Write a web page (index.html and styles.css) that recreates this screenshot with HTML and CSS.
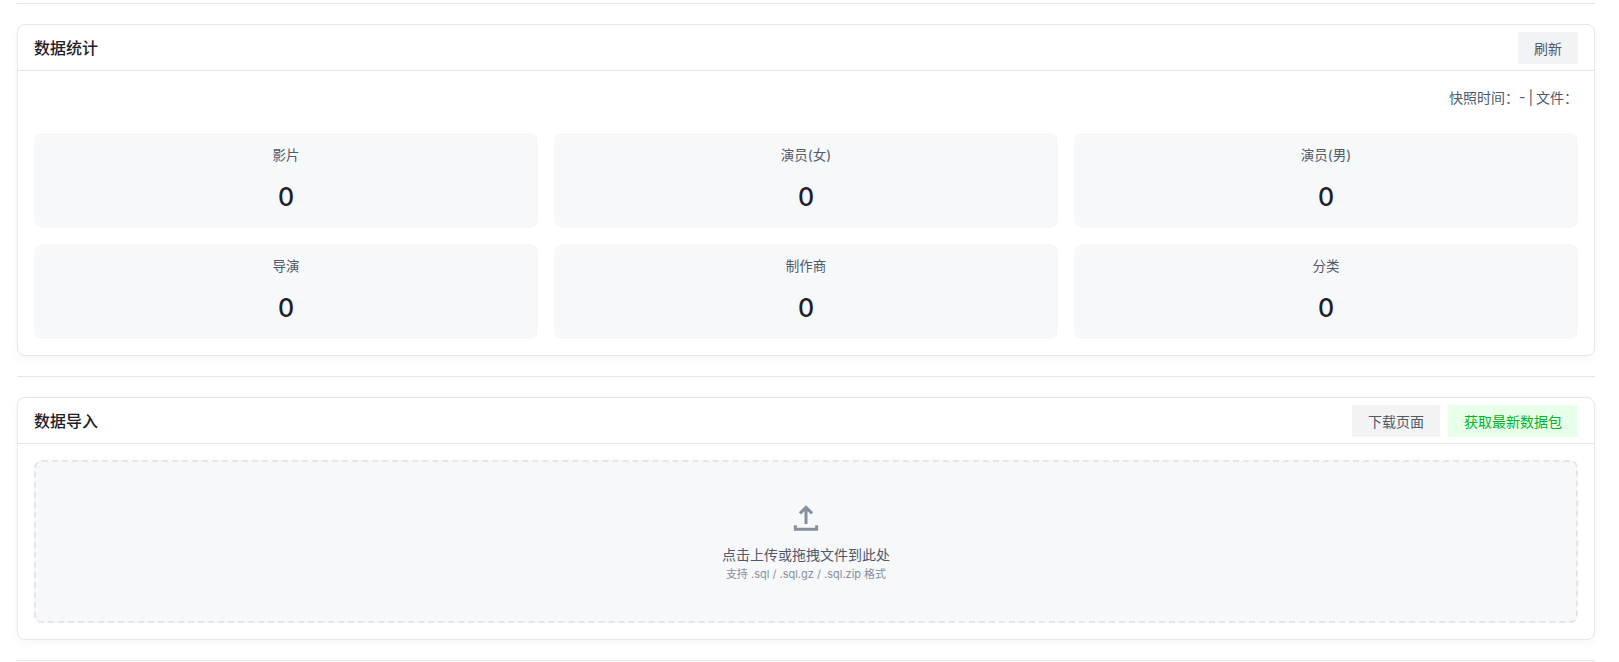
FILE: index.html
```html
<!DOCTYPE html>
<html lang="zh-CN">
<head>
<meta charset="utf-8">
<title>数据管理</title>
<link rel="stylesheet" href="styles.css">
</head>
<body>
<main class="page">
  <hr class="divider divider-top">
  <section class="card">
    <header class="card-header">
      <h2 class="card-title">数据统计</h2>
      <div class="actions"><button class="btn">刷新</button></div>
    </header>
    <div class="card-body">
      <p class="snapshot">快照时间：- | 文件：</p>
      <div class="stats">
        <div class="stat"><div class="stat-label">影片</div><div class="stat-value">0</div></div>
        <div class="stat"><div class="stat-label">演员(女)</div><div class="stat-value">0</div></div>
        <div class="stat"><div class="stat-label">演员(男)</div><div class="stat-value">0</div></div>
        <div class="stat"><div class="stat-label">导演</div><div class="stat-value">0</div></div>
        <div class="stat"><div class="stat-label">制作商</div><div class="stat-value">0</div></div>
        <div class="stat"><div class="stat-label">分类</div><div class="stat-value">0</div></div>
      </div>
    </div>
  </section>
  <hr class="divider">
  <section class="card">
    <header class="card-header">
      <h2 class="card-title">数据导入</h2>
      <div class="actions">
        <button class="btn">下载页面</button>
        <button class="btn btn-success">获取最新数据包</button>
      </div>
    </header>
    <div class="card-body">
      <div class="dropzone">
        <svg class="upload-icon" viewBox="0 0 48 48" fill="none" stroke="currentColor" stroke-width="4.5"><path d="M14.93 17.071 24.001 8l9.071 9.071m-9.07 16.071v-25M40 35v6H8v-6"/></svg>
        <div class="drop-title">点击上传或拖拽文件到此处</div>
        <div class="drop-hint">支持 .sql / .sql.gz / .sql.zip 格式</div>
      </div>
    </div>
  </section>
  <hr class="divider">
</main>
</body>
</html>
```
FILE: styles.css
```css
* { box-sizing: border-box; }
html, body { margin: 0; height: 100%; overflow: hidden; background: #fff; }
body {
  font-family: Inter, "Noto Sans CJK SC", sans-serif;
  font-size: 14px;
  color: #1d2129;
}
.page { padding: 3px 24px 0 17px; }
.divider { margin: 20px 0; height: 1px; border: 0; background: #e5e6eb; }
.divider-top { margin-top: 0; }
.card {
  background: #fff;
  border: 1px solid #e5e6eb;
  border-radius: 8px;
  box-shadow: 0 4px 10px rgba(0, 0, 0, 0.03);
}
.card-header {
  height: 46px;
  padding: 0 16px;
  display: flex;
  align-items: center;
  justify-content: space-between;
  border-bottom: 1px solid #e5e6eb;
}
.card-title { margin: 0; font-size: 16px; font-weight: 500; line-height: 24px; }
.actions { display: flex; gap: 8px; }
.btn {
  height: 32px;
  padding: 0 16px;
  border: 0;
  border-radius: 2px;
  background: #f2f3f5;
  color: #4e5969;
  font: inherit;
  cursor: pointer;
}
.btn-success { background: #e8ffea; color: #00b42a; }
.card-body { padding: 16px; }
.snapshot {
  margin: 0 0 24px;
  text-align: right;
  line-height: 22px;
  color: #4e5969;
  word-spacing: -1px;
}
.stats { display: grid; grid-template-columns: repeat(3, 1fr); gap: 16px; }
.stat {
  height: 95px;
  padding-top: 11px;
  background: #f7f8fa;
  border-radius: 8px;
  text-align: center;
}
.stat-label { font-size: 13.5px; line-height: 22px; color: #4e5969; margin-bottom: 13px; }
.stat-value { font-size: 25px; font-weight: 500; line-height: 36px; color: #1d2129; }
.dropzone {
  height: 163px;
  display: flex;
  flex-direction: column;
  align-items: center;
  justify-content: center;
  background: #f7f8fa;
  border: 2px dashed #e5e6eb;
  border-radius: 8px;
}
.upload-icon { width: 32px; height: 32px; color: #86909c; margin: 0 0 10px; }
.drop-title { line-height: 22px; color: #4e5969; }
.drop-hint { font-size: 11px; line-height: 16px; color: #86909c; }
```
